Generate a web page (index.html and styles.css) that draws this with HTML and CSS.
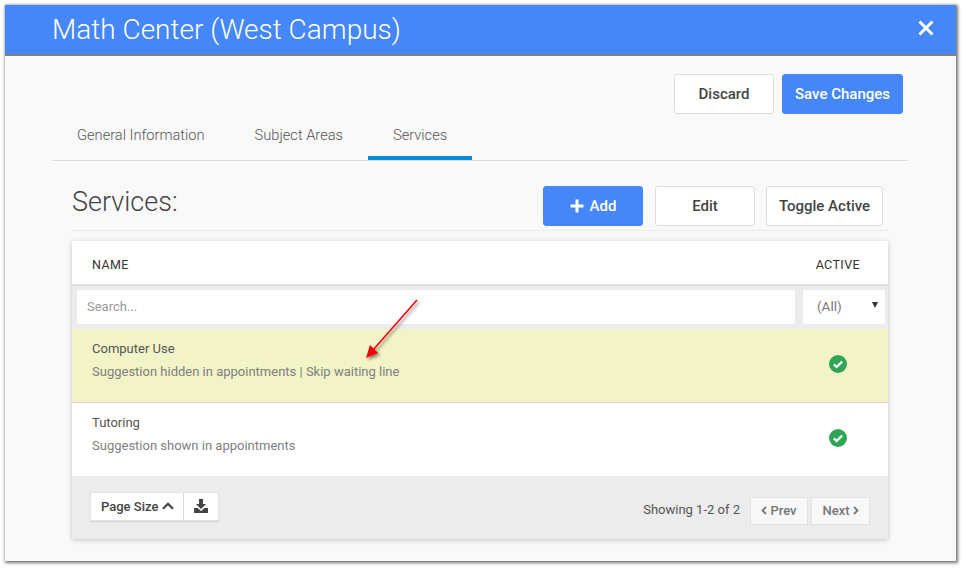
FILE: index.html
```html
<!DOCTYPE html>
<html lang="en">
<head>
<meta charset="utf-8">
<title>Math Center (West Campus)</title>
<link rel="stylesheet" href="styles.css">
</head>
<body>
<div class="modal">
  <header class="modal-head">
    <h1 class="modal-title">Math Center (West Campus)</h1>
    <svg class="close" width="16" height="16" viewBox="0 0 16 16"><path d="M1.500 1.500 14.500 14.500M14.500 1.500 1.500 14.500" stroke="#fff" stroke-width="3" fill="none"/></svg>
  </header>
  <main class="modal-body">
    <div class="actions">
      <button class="btn btn-discard">Discard</button>
      <button class="btn btn-primary btn-save">Save Changes</button>
    </div>
    <nav class="tabs">
      <a class="tab">General Information</a>
      <a class="tab">Subject Areas</a>
      <a class="tab tab-active">Services</a>
    </nav>
    <section class="services">
      <div class="services-head">
        <h2 class="services-title">Services:</h2>
        <div class="services-btns">
          <button class="btn btn-primary btn-add"><svg width="14" height="14" viewBox="0 0 14 14"><path d="M7 .5v13M.5 7h13" stroke="#fff" stroke-width="3" fill="none"/></svg>Add</button>
          <button class="btn btn-edit">Edit</button>
          <button class="btn btn-toggle">Toggle Active</button>
        </div>
      </div>
      <div class="table">
        <div class="table-head">
          <span>NAME</span>
          <span class="head-active">ACTIVE</span>
        </div>
        <div class="filters">
          <div class="input search">Search...</div>
          <div class="input select">(All)<span class="caret"></span></div>
        </div>
        <div class="row row-hl">
          <div class="row-text">
            <div class="row-name">Computer Use</div>
            <div class="row-sub">Suggestion hidden in appointments | Skip waiting line</div>
          </div>
          <svg class="check" width="18" height="18" viewBox="0 0 17 17"><circle cx="8.500" cy="8.500" r="8.500" fill="#2ea655"/><path d="M4.600 8.800 7.200 11.300 12.400 6.200" stroke="#fff" stroke-width="2.200" fill="none"/></svg>
        </div>
        <div class="row">
          <div class="row-text">
            <div class="row-name">Tutoring</div>
            <div class="row-sub">Suggestion shown in appointments</div>
          </div>
          <svg class="check" width="18" height="18" viewBox="0 0 17 17"><circle cx="8.500" cy="8.500" r="8.500" fill="#2ea655"/><path d="M4.600 8.800 7.200 11.300 12.400 6.200" stroke="#fff" stroke-width="2.200" fill="none"/></svg>
        </div>
        <div class="table-foot">
          <div class="group">
            <div class="group-item page-size">Page Size<svg width="12" height="8" viewBox="0 0 12 8"><path d="M1 6.800 6 1.800 11 6.800" stroke="#444" stroke-width="2.200" fill="none"/></svg></div>
            <div class="group-item download"><svg width="14" height="14" viewBox="0 0 14 14"><path fill="#444" d="M5 0h4v5h3L7 10 2 5h3zM0 9h3.500L7 12l3.500-3H14v5H0z"/></svg></div>
          </div>
          <div class="pager">
            <span class="showing">Showing 1-2 of 2</span>
            <div class="page-btn page-prev"><svg width="6" height="9" viewBox="0 0 6 9"><path d="M5 1 1.500 4.500 5 8" stroke="#777" stroke-width="1.800" fill="none"/></svg>Prev</div>
            <div class="page-btn page-next">Next<svg width="6" height="9" viewBox="0 0 6 9"><path d="M1 1 4.500 4.500 1 8" stroke="#777" stroke-width="1.800" fill="none"/></svg></div>
          </div>
        </div>
      </div>
    </section>
  </main>
  <svg class="arrow" width="70" height="76" viewBox="0 0 70 76">
    <defs><filter id="sh" x="-30%" y="-30%" width="170%" height="170%"><feDropShadow dx="2" dy="2" stdDeviation="1.500" flood-color="#000" flood-opacity=".45"/></filter></defs>
    <g filter="url(#sh)"><path d="M52 2 8 52" stroke="#f5000a" stroke-width="1.600" fill="none"/><path d="M1 60 5 47 13 55z" fill="#f5000a"/></g>
  </svg>
</div>
</body>
</html>
```
FILE: styles.css
```css
* { box-sizing: border-box; }
html, body { margin: 0; height: 100%; background: #fff; overflow: hidden; }
body { padding: 5px 0 0 5px; font-family: Roboto, "Liberation Sans", sans-serif; color: #444; }
.modal {
  position: relative;
  width: 951px;
  height: 556px;
  background: #f9f9f9;
  box-shadow: 1px 1px 3px 1px rgba(0,0,0,.55);
}
.modal-head {
  height: 51px;
  background: #4587f7;
  border-bottom: 2px solid #7f8080;
  padding: 0 22px 0 47px;
  display: flex;
  align-items: center;
  justify-content: space-between;
}
.modal-title { margin: 0; font-size: 28px; font-weight: 300; color: #fff; line-height: 49px; }
.close { margin-top: -4px; }
.modal-body { padding: 18px 48px 0 47px; }
.btn {
  height: 40px;
  font-family: inherit;
  font-size: 15px;
  font-weight: 500;
  color: #444;
  background: #fff;
  border: 1px solid #dedede;
  border-radius: 3px;
  padding: 0;
}
.btn-primary { background: #4587f7; border-color: #4587f7; color: #fff; }
.actions { display: flex; justify-content: flex-end; gap: 8px; padding-right: 5px; }
.btn-discard { width: 100px; }
.btn-save { width: 121px; }
.tabs { display: flex; height: 47px; border-bottom: 1px solid #dcdcdc; margin-top: 0; }
.tab {
  padding: 12px 25px 0;
  font-size: 14.65px;
  font-weight: 300;
  color: #555;
  line-height: 18px;
  height: 46px;
}
.tab-active { border-bottom: 4px solid #0a8ad8; }
.services { padding: 25px 20px 0 20px; }
.services-head {
  display: flex;
  justify-content: space-between;
  height: 45px;
  border-bottom: 1px solid #ebebeb;
}
.services-title { margin: 1px 0 0; font-size: 27px; font-weight: 300; color: #444; line-height: 30px; }
.services-btns { display: flex; padding-right: 5px; }
.btn-add { width: 100px; margin-right: 12px; display: flex; align-items: center; justify-content: center; gap: 6px; }
.btn-edit { width: 100px; margin-right: 11px; }
.btn-toggle { width: 117px; }
.table {
  margin-top: 10px;
  background: #fff;
  box-shadow: 0 1px 5px rgba(0,0,0,.22);
}
.table-head {
  height: 45px;
  padding: 3px 28px 0 20px;
  display: flex;
  align-items: center;
  justify-content: space-between;
  font-size: 12.5px;
  font-weight: 400;
  color: #333;
  letter-spacing: .4px;
  border-bottom: 2px solid #dedede;
}
.filters {
  height: 43px;
  padding: 4px 3px 5px 5px;
  background: #ececec;
  display: flex;
  gap: 8px;
}
.input {
  height: 34px;
  padding-bottom: 2px;
  background: #fff;
  border-radius: 2px;
  font-size: 13px;
  display: flex;
  align-items: center;
  color: #999;
}
.search { flex: 1; padding-left: 10px; }
.select { width: 82px; padding: 0 7px 2px 14px; color: #777; justify-content: space-between; font-size: 13.500px; }
.caret { border-left: 3px solid transparent; border-right: 3px solid transparent; border-top: 6px solid #333; margin-top: -2px; }
.row {
  height: 74px;
  padding: 11px 41px 0 20px;
  display: flex;
  justify-content: space-between;
  border-bottom: 1px solid #e4e4e4;
}
.row-hl { background: #f2f3c6; border-bottom-color: #dcdcc8; }
.row + .row { border-bottom: 0; height: 73px; }
.row-name { font-size: 13px; line-height: 18px; color: #555; }
.row-sub { font-size: 13px; line-height: 18px; color: #808080; margin-top: 5px; }
.check { margin-top: 15px; }
.table-foot {
  height: 63px;
  background: #ececec;
  padding: 16px 18px 0;
  display: flex;
  justify-content: space-between;
}
.group { display: flex; height: 29px; box-shadow: 0 1px 1px rgba(0,0,0,.1); }
.group-item {
  background: #fff;
  border: 1px solid #e4e4e4;
  padding-bottom: 1px;
  display: flex;
  align-items: center;
  font-size: 13px;
  font-weight: 500;
  color: #444;
}
.page-size { width: 94px; padding-left: 10px; gap: 4px; border-right: 1px solid #d8d8d8; }
.download { width: 35px; justify-content: center; border-left: 0; }
.pager { display: flex; align-items: flex-start; padding-top: 5px; }
.showing { font-size: 13px; color: #555; line-height: 29px; margin-right: 10px; margin-top: -2px; }
.page-btn {
  height: 28px;
  width: 58px;
  padding-bottom: 1px;
  background: #f8f8f8;
  border: 1px solid #e2e2e2;
  display: flex;
  align-items: center;
  justify-content: center;
  gap: 3px;
  font-size: 13px;
  font-weight: 500;
  color: #777;
}
.page-next { margin-left: 3px; width: 59px; }
.arrow { position: absolute; left: 360px; top: 293px; }
```
